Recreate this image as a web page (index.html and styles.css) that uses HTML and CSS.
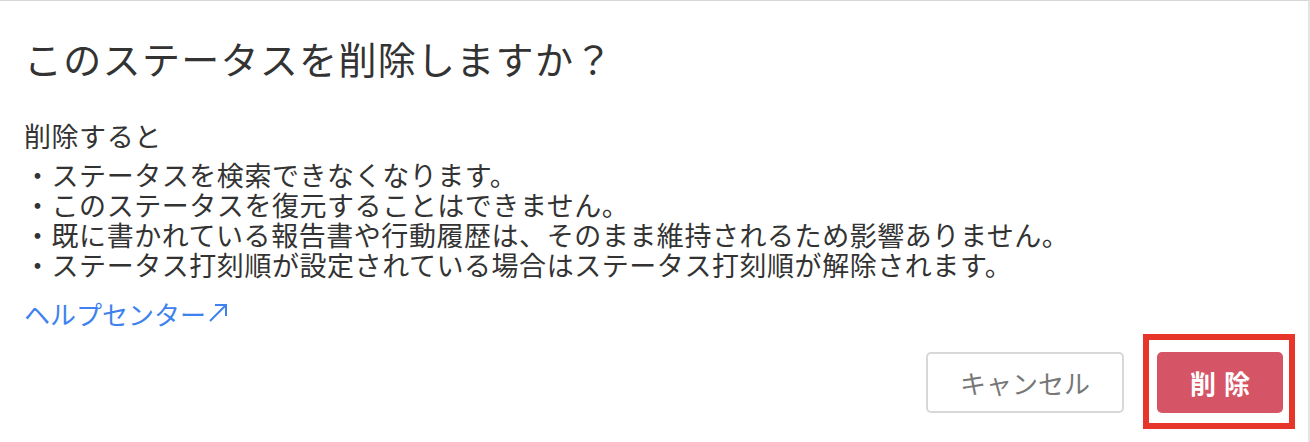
FILE: index.html
```html
<!DOCTYPE html>
<html lang="ja">
<head>
<meta charset="utf-8">
<title>ステータスの削除</title>
<link rel="stylesheet" href="styles.css">
</head>
<body>
<div class="dialog">
  <h1 class="dialog-title">このステータスを削除しますか？</h1>
  <div class="dialog-body">
    <p class="lead">削除すると</p>
    <ul class="notes">
      <li>・ステータスを検索できなくなります。</li>
      <li>・このステータスを復元することはできません。</li>
      <li>・既に書かれている報告書や行動履歴は、そのまま維持されるため影響ありません。</li>
      <li>・ステータス打刻順が設定されている場合はステータス打刻順が解除されます。</li>
    </ul>
    <a class="help-link" href="#">ヘルプセンター<svg class="ext-icon" viewBox="0 0 20 20" width="20" height="20" aria-hidden="true"><path d="M2 18 L18 2 M7 2 H18 V13" fill="none" stroke="currentColor" stroke-width="2"/></svg></a>
  </div>
  <div class="dialog-actions">
    <button class="btn btn-cancel" type="button">キャンセル</button>
    <div class="focus-wrap">
      <button class="btn btn-danger" type="button"><span>削</span><span>除</span></button>
      <span class="focus-ring"></span>
    </div>
  </div>
</div>
</body>
</html>
```
FILE: styles.css
```css
* { box-sizing: border-box; }

html, body {
  margin: 0;
  padding: 0;
  background: #fff;
}

body {
  font-family: "Noto Sans CJK JP", "Noto Sans", sans-serif;
  color: #333;
}

.dialog {
  width: 1310px;
  height: 442px;
  border-top: 1px solid #d6d6d6;
  border-right: 2px solid #e4e4e4;
  padding: 34px 25px 0 24px;
  display: flex;
  flex-direction: column;
}

.dialog-title {
  margin: 0;
  font-size: 38px;
  line-height: 46px;
  font-weight: 400;
  letter-spacing: 1.3px;
  color: #333;
}

.dialog-body {
  margin-top: 40px;
  font-size: 27px;
  line-height: 30px;
  letter-spacing: 0.55px;
}

.lead {
  margin: 0 0 9px;
}

.notes {
  list-style: none;
  margin: 0;
  padding: 0;
}

.help-link {
  display: inline-flex;
  align-items: center;
  margin-top: 19px;
  font-size: 26px;
  line-height: 30px;
  letter-spacing: 0;
  color: #3d82ee;
  text-decoration: none;
}

.ext-icon {
  margin-left: 2px;
  margin-top: -2px;
}

.dialog-actions {
  margin-top: 23px;
  display: flex;
  justify-content: flex-end;
  gap: 33px;
}

.btn {
  height: 61px;
  border-radius: 5px;
  font-family: inherit;
  font-size: 26px;
  cursor: pointer;
}

.btn-cancel {
  width: 198px;
  background: #fff;
  border: 2px solid #d8d8d8;
  color: #777;
}

.focus-wrap {
  position: relative;
}

.btn-danger {
  width: 126px;
  background: #d55567;
  border: none;
  color: #fff;
  font-weight: 700;
  display: flex;
  justify-content: center;
  align-items: center;
  gap: 8px;
}

.focus-ring {
  position: absolute;
  left: -14px;
  top: -18px;
  right: -12px;
  bottom: -16px;
  border: 6px solid #e8352a;
  pointer-events: none;
}
```
